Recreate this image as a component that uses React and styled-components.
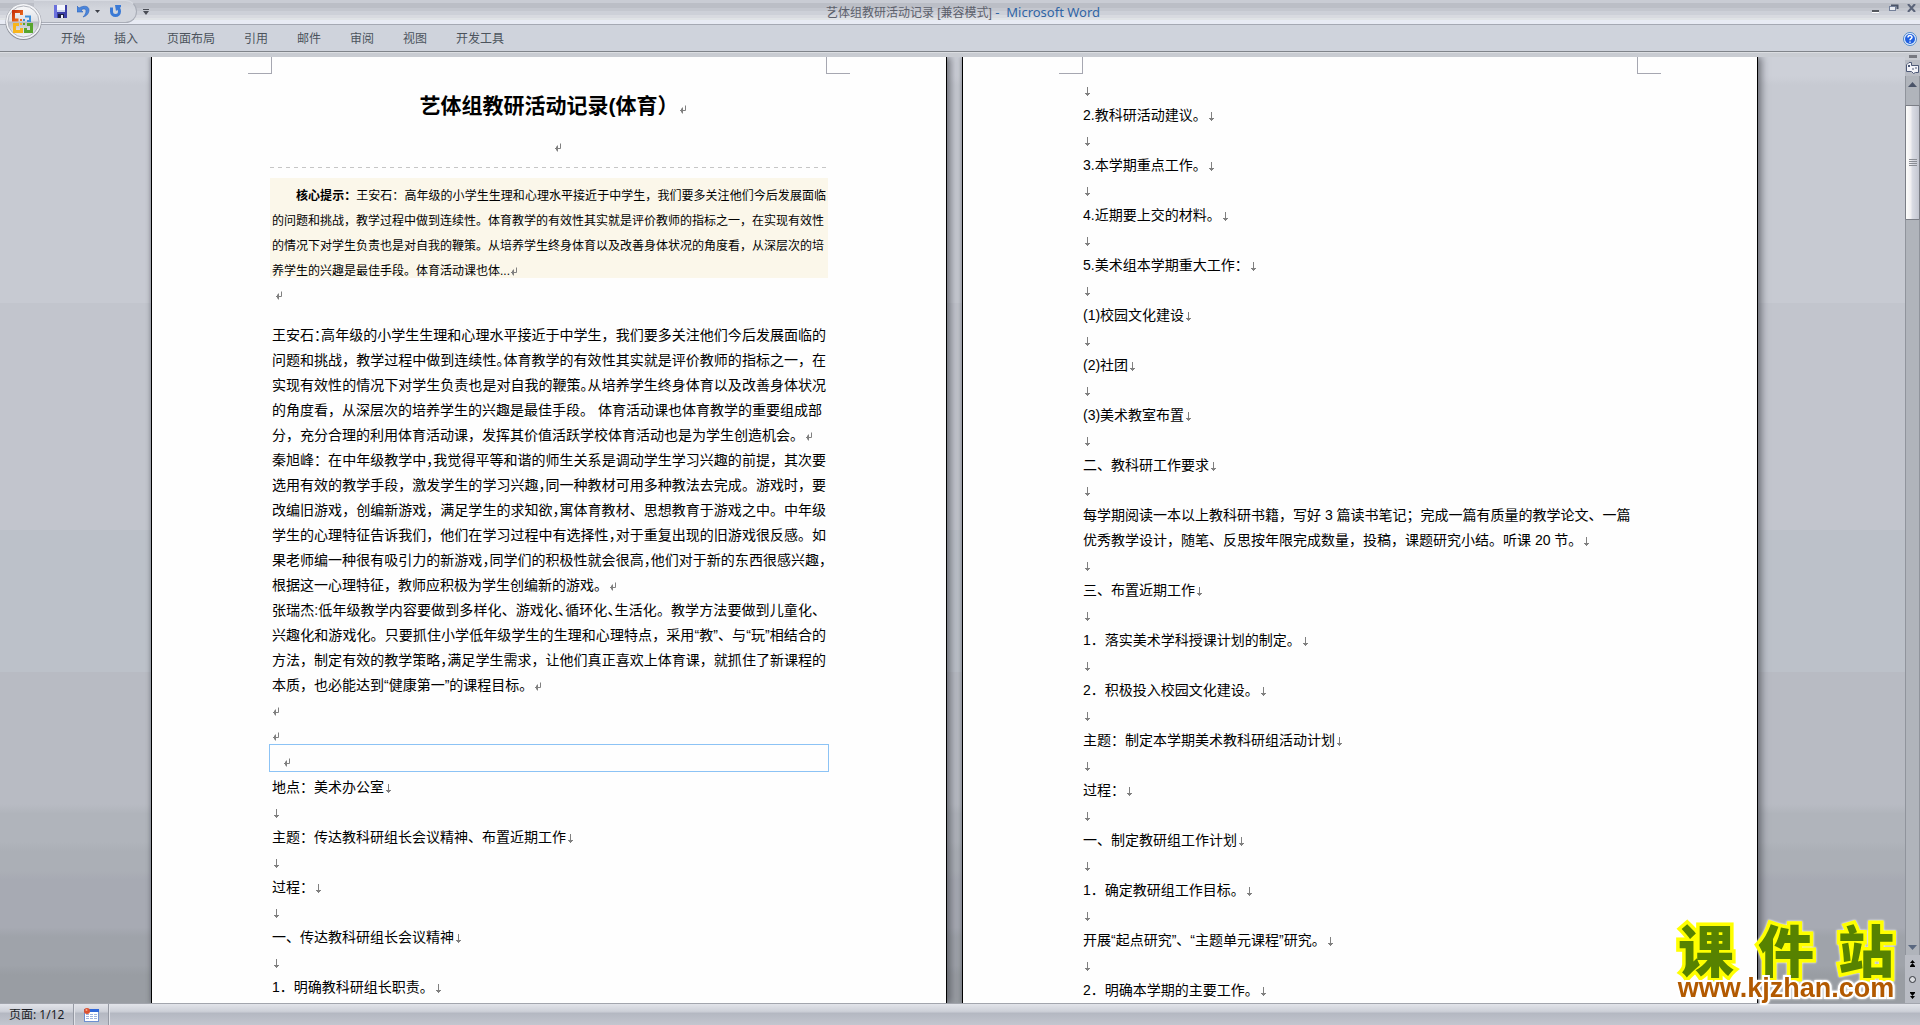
import React from "react";
import styled, { createGlobalStyle } from "styled-components";

const GlobalStyle = createGlobalStyle`
  * {
    box-sizing: border-box;
  }

  body {
    margin: 0;
    overflow: hidden;
    font-family: "Liberation Sans", "Noto Sans CJK SC", sans-serif;
  }

  button {
    font: inherit;
    color: inherit;
    background: none;
    border: none;
    padding: 0;
    cursor: pointer;
  }
`;

const Window = styled.div`
  position: relative;
  height: 100vh;
  display: flex;
  flex-direction: column;
  background: #c9ccd2;
`;

const TitleBar = styled.header`
  height: 25px;
  flex: none;
  display: grid;
  grid-template-columns: 1fr auto 1fr;
  align-items: start;
  padding-left: 6px;
  border-bottom: 1px solid #a5a9b3;
  background: linear-gradient(
    #c9ccd4 0 3px,
    #bbbec6 3px 8px,
    #c4c7cf 8px 11px,
    #cdd0d8 11px 15px,
    #d8dae0 15px 18px,
    #e0e3e6 18px 20px,
    #e8ebf4 20px 24px
  );
`;

const QuickAccess = styled.div`
  display: flex;
  align-items: center;
  gap: 5px;
  margin-left: 28px;
`;

const QuickPill = styled.div`
  height: 23px;
  display: flex;
  align-items: center;
  padding: 0 13px 0 19px;
  background: linear-gradient(#c9ccd4, #d3d6dd 40%, #d3d6dd);
  border: 1px solid #a9adb7;
  border-top-color: #d8dbe2;
  border-left: none;
  border-radius: 0 12px 12px 0;
`;

const ToolButton = styled.button`
  display: flex;
  align-items: center;
  justify-content: center;
  height: 16px;
  width: ${(props) => props.$width || 16}px;
  margin-right: ${(props) => props.$after || 0}px;
`;

const Caption = styled.h1`
  margin: 0;
  font-size: 12px;
  font-weight: 400;
  line-height: 24px;
  color: #5c606b;
  white-space: pre;
`;

const AppName = styled.span`
  font-family: "Noto Sans", sans-serif;
  font-size: 13px;
  color: #3065a5;
`;

const WindowButtons = styled.div`
  justify-self: end;
  display: flex;
  gap: 2px;
`;

const OfficeButton = styled.button`
  position: absolute;
  left: 5px;
  top: 3px;
  width: 39px;
  height: 39px;
  display: flex;
`;

const Ribbon = styled.nav`
  height: 28px;
  flex: none;
  display: flex;
  align-items: center;
  gap: 29px;
  padding: 0 3px 0 61px;
  background: #cfd3dc;
  border-bottom: 1px solid #dcdee2;
  box-shadow: inset 0 -1px 0 #80848a;
`;

const RibbonTab = styled.button`
  font-size: 12px;
  line-height: 24px;
  color: #4c535c;
`;

const HelpButton = styled.button`
  display: flex;
  margin-left: auto;
`;

const Body = styled.div`
  flex: 1;
  min-height: 0;
  display: flex;
`;

const Workspace = styled.main`
  flex: 1;
  min-width: 0;
  display: flex;
  justify-content: center;
  align-items: stretch;
  gap: 15px;
  margin-top: 4px;
  padding-left: 4px;
  overflow: hidden;
  background: linear-gradient(
    #cdd0d8 0 2%,
    #c7cad2 3% 26%,
    #c2c5cd 26% 50%,
    #bcc1c9 50% 65%,
    #b8bbc3 65% 79%,
    #b0b4bb 80% 83%,
    #abafb6 84% 86%,
    #a7aab3 87% 92%,
    #9fa3aa 93% 96%,
    #999da3 97%
  );
`;

const Sheet = styled.article`
  flex: 0 1 796px;
  background: #fefefe;
  border: solid #000;
  border-width: 0 1px;
  box-shadow: 4px 0 7px rgba(70, 72, 80, 0.6), -1px 0 4px rgba(70, 72, 80, 0.4);
`;

const CropMarks = styled.div`
  height: 17px;
  display: flex;
  justify-content: space-between;
  padding: 0 96px;
`;

const CropMark = styled.span`
  width: 24px;
  border: solid #a6a7b1;
  border-width: ${(props) => (props.$side === "left" ? "0 1px 1px 0" : "0 0 1px 1px")};
`;

const SheetText = styled.div`
  padding: ${(props) => props.$top}px 120px 0;
`;

const DocTitle = styled.h2`
  margin: 0;
  font-size: 21px;
  line-height: 40px;
  text-align: center;
  padding-left: 8px;
`;

const TitleGap = styled.div`
  height: 42px;
  display: flex;
  align-items: center;
  justify-content: center;
  padding-left: 18px;
  margin: 0 -2px;
  background: repeating-linear-gradient(90deg, #c6c6c6 0 4px, transparent 4px 8px) bottom / 100% 1px no-repeat;
`;

const Hint = styled.div`
  height: 100px;
  margin: 10px -2px 0;
  padding: 6px 2px 0;
  background: #fbf7ea;
  font-size: 12px;
`;

const HintGap = styled.div`
  height: 45px;
  padding: 4px 0 0 2px;
`;

const Row = styled.p`
  margin: 0;
  height: 25px;
  line-height: 25px;
  font-size: ${(props) => (props.$small ? 12 : 14)}px;
  color: #000;
  white-space: nowrap;
  text-indent: ${(props) => (props.$indent ? 24 : 0)}px;
  text-align-last: ${(props) => (props.$full ? "justify" : "left")};
`;

const HalfWidth = styled.span`
  font-feature-settings: "halt" 1;
`;

const SelectedFrame = styled.div`
  height: 28px;
  margin: -4px -3px 3px;
  padding: 4px 0 0 13px;
  border: 1px solid #8cc3f5;
`;

const MarkSvg = styled.svg`
  margin-left: ${(props) => props.$before}px;
  vertical-align: -1px;
`;

const ScrollColumn = styled.aside`
  width: 15px;
  flex: none;
  display: flex;
  flex-direction: column;
  align-items: stretch;
  background: #b9bcc4;
`;

const SplitHandle = styled.div`
  height: 7px;
  padding: 2px 3px 2px 4px;
  background: #c9ccd2;

  &::before {
    content: "";
    display: block;
    height: 3px;
    background: #777980;
  }
`;

const ScrollButton = styled.button`
  display: flex;
  align-items: center;
  justify-content: center;
  height: 16px;
`;

const Track = styled.div`
  flex: 1;
  min-height: 0;
  display: flex;
  flex-direction: column;
  background: #b0b4bb;
  border-left: 1px solid #90949c;
  border-right: 1px solid #90949c;
`;

const Thumb = styled.div`
  height: 115px;
  margin: 13px -1px auto;
  display: flex;
  align-items: center;
  justify-content: center;
  border: 1px solid #7b7e86;
  border-radius: 1px;
  background: linear-gradient(90deg, #fdfdfb, #f1f0f2 35%, #d9dbe3 50%, #c3c6d0);
`;

const StatusBar = styled.footer`
  height: 22px;
  flex: none;
  display: flex;
  align-items: stretch;
  border-top: 1px solid #a2a5ad;
  background: linear-gradient(#e2e4ea, #cdd0d8 35%, #b4b8c2 45%, #c3c6cf);
`;

const StatusButton = styled.button`
  display: flex;
  align-items: center;
  padding: 0 9px;
  font-family: "Noto Sans", "Noto Sans CJK SC", sans-serif;
  font-size: 12px;
  line-height: 20px;
  color: #1b1e26;
  border-right: 1px solid #9599a3;
  box-shadow: 1px 0 0 #e1e3e9;
`;

const Watermark = styled.a`
  position: absolute;
  right: 20px;
  bottom: 25px;
  width: 228px;
  text-decoration: none;
  font-weight: 700;
  paint-order: stroke fill;
  filter: drop-shadow(0 0 1px #fff);
`;

const WatermarkName = styled.span`
  display: flex;
  justify-content: space-between;
  padding: 0 6px;
  font-size: 56px;
  font-weight: 900;
  line-height: 46px;
  color: #578200;
  -webkit-text-stroke: 7px #ffff00;
`;

const WatermarkUrl = styled.span`
  display: block;
  text-align: center;
  font-size: 27px;
  line-height: 24px;
  color: #b25900;
  -webkit-text-stroke: 4px #fff;
`;

const ParagraphMark = ({ before = 1 }) => (
  <MarkSvg $before={before} width="8" height="9" viewBox="0 0 8 9" fill="none" stroke="#808080" aria-hidden="true">
    <path d="M6.500 0.500V5.500H1M3.500 2.500V8.500M2.500 3.500V7.500" />
  </MarkSvg>
);

const BreakMark = ({ before = 2 }) => (
  <MarkSvg $before={before} width="5" height="9" viewBox="0 0 5 9" fill="none" stroke="#808080" aria-hidden="true">
    <path d="M2.500 0V9M0 6.500H5M1 7.500H4" />
  </MarkSvg>
);

const PUNCTUATION = /[，。、：]/g;

// Sets `count` punctuation marks, taken from the middle of the line, at half width.
const squeeze = (text, count) => {
  const places = [...text.matchAll(PUNCTUATION)].map((m) => m.index);
  const first = Math.floor((places.length - count) / 2);
  const chosen = places.slice(first, first + count);
  const parts = [];
  let from = 0;
  chosen.forEach((at) => {
    parts.push(text.slice(from, at));
    parts.push(<HalfWidth key={at}>{text[at]}</HalfWidth>);
    from = at + 1;
  });
  parts.push(text.slice(from));
  return parts;
};

const hintLines = [
  "的问题和挑战，教学过程中做到连续性。体育教学的有效性其实就是评价教师的指标之一，在实现有效性",
  "的情况下对学生负责也是对自我的鞭策。从培养学生终身体育以及改善身体状况的角度看，从深层次的培",
];

const speechLines = [
  { text: "王安石：高年级的小学生生理和心理水平接近于中学生，我们要多关注他们今后发展面临的", half: 1, full: true },
  { text: "问题和挑战，教学过程中做到连续性。体育教学的有效性其实就是评价教师的指标之一，在", half: 1, full: true },
  { text: "实现有效性的情况下对学生负责也是对自我的鞭策。从培养学生终身体育以及改善身体状况", half: 1, full: true },
  { text: "的角度看，从深层次的培养学生的兴趣是最佳手段。 体育活动课也体育教学的重要组成部" },
  { text: "分，充分合理的利用体育活动课，发挥其价值活跃学校体育活动也是为学生创造机会。", end: true },
  { text: "秦旭峰：在中年级教学中，我觉得平等和谐的师生关系是调动学生学习兴趣的前提，其次要", half: 1, full: true },
  { text: "选用有效的教学手段，激发学生的学习兴趣，同一种教材可用多种教法去完成。游戏时，要", half: 1, full: true },
  { text: "改编旧游戏，创编新游戏，满足学生的求知欲，寓体育教材、思想教育于游戏之中。中年级", half: 1, full: true },
  { text: "学生的心理特征告诉我们，他们在学习过程中有选择性，对于重复出现的旧游戏很反感。如", half: 1, full: true },
  { text: "果老师编一种很有吸引力的新游戏，同学们的积极性就会很高，他们对于新的东西很感兴趣，", half: 3, full: true },
  { text: "根据这一心理特征，教师应积极为学生创编新的游戏。", end: true },
  { text: "张瑞杰:低年级教学内容要做到多样化、游戏化、循环化、生活化。教学方法要做到儿童化、", half: 2, full: true },
  { text: "兴趣化和游戏化。只要抓住小学低年级学生的生理和心理特点，采用“教”、与“玩”相结合的", full: true },
  { text: "方法，制定有效的教学策略，满足学生需求，让他们真正喜欢上体育课，就抓住了新课程的", half: 1, full: true },
  { text: "本质，也必能达到“健康第一”的课程目标。", end: true },
];

const agenda = [
  "地点：美术办公室",
  "主题：传达教科研组长会议精神、布置近期工作",
  "过程：",
  "一、传达教科研组长会议精神",
  "1．明确教科研组长职责。",
];

const plan = [
  ["2.教科研活动建议。"],
  ["3.本学期重点工作。"],
  ["4.近期要上交的材料。"],
  ["5.美术组本学期重大工作："],
  ["(1)校园文化建设"],
  ["(2)社团"],
  ["(3)美术教室布置"],
  ["二、教科研工作要求"],
  [
    "每学期阅读一本以上教科研书籍，写好 3 篇读书笔记；完成一篇有质量的教学论文、一篇",
    "优秀教学设计，随笔、反思按年限完成数量，投稿，课题研究小结。听课 20 节。",
  ],
  ["三、布置近期工作"],
  ["1．落实美术学科授课计划的制定。"],
  ["2．积极投入校园文化建设。"],
  ["主题：制定本学期美术教科研组活动计划"],
  ["过程："],
  ["一、制定教研组工作计划"],
  ["1．确定教研组工作目标。"],
  ["开展“起点研究”、“主题单元课程”研究。"],
  ["2．明确本学期的主要工作。"],
];

const tabs = ["开始", "插入", "页面布局", "引用", "邮件", "审阅", "视图", "开发工具"];

const OfficeLogo = () => (
  <svg width="39" height="39" viewBox="0 0 39 39">
    <defs>
      <linearGradient id="orb" x1="0" y1="0" x2="0" y2="1">
        <stop offset="0" stopColor="#fafafb" />
        <stop offset="0.48" stopColor="#dfe1e6" />
        <stop offset="0.52" stopColor="#b9bcc6" />
        <stop offset="1" stopColor="#f6f7fa" />
      </linearGradient>
      <linearGradient id="red" x1="0" y1="0" x2="1" y2="1">
        <stop offset="0" stopColor="#c8330c" />
        <stop offset="1" stopColor="#f47a20" />
      </linearGradient>
    </defs>
    <circle cx="18.500" cy="19" r="18" fill="#8b8e97" />
    <circle cx="18.500" cy="18.500" r="17.500" fill="#f4f5f8" />
    <circle cx="18.500" cy="18.500" r="15.500" fill="url(#orb)" stroke="#b0b3bb" />
    <g fill="none" strokeWidth="3">
      <path d="M13.500 17H8.500V8.500H16.500V12" stroke="url(#red)" />
      <path d="M20 13.500H25V18H22" stroke="#3f8fd8" strokeWidth="2" />
      <path d="M14 21.500H9.500V28.500H16.500V25" stroke="#f8b51c" />
      <path d="M22 21.500H26.500V28.500H20.500V25" stroke="#58a52e" />
    </g>
    <g>
      <rect x="15" y="16" width="2" height="2" fill="#ee6a1c" />
      <rect x="18" y="16" width="2" height="2" fill="#3f8fd8" />
      <rect x="15" y="20" width="2" height="2" fill="#f8b51c" />
      <rect x="18" y="20" width="2" height="2" fill="#58a52e" />
    </g>
  </svg>
);

const SaveIcon = () => (
  <svg width="14" height="14" viewBox="0 0 14 14">
    <path d="M0 0H13V13H1L0 12Z" fill="#3b3fa8" />
    <path d="M0 0H3V13H1L0 12Z" fill="#6a70dd" />
    <rect x="3" y="0" width="8" height="7" fill="#f4f6fc" />
    <rect x="3" y="5" width="8" height="2" fill="#c9d2ee" />
    <rect x="4" y="9" width="6" height="4" fill="#1c1f45" />
    <rect x="7" y="10" width="2" height="3" fill="#eef0fa" />
  </svg>
);

const UndoIcon = () => (
  <svg width="13" height="13" viewBox="0 0 13 13">
    <path
      d="M0 1V7H6L4 5C7 3 9 4 9 6C9 8 8 10 6 12C10 11 12 8 12 5C12 1 7 0 2 3Z"
      fill="#4a86dc"
      stroke="#2d62ba"
      strokeWidth="0.600"
    />
  </svg>
);

const RedoIcon = () => (
  <svg width="13" height="13" viewBox="0 0 13 13">
    <path d="M2.500 2.500V6.500A4 4 0 0 0 10.500 6.500C10.500 4.500 9.500 3 8 2.500" fill="none" stroke="#3b7ad6" strokeWidth="3" />
    <path d="M6 0H12V2L7 6Z" fill="#3b7ad6" />
  </svg>
);

const HelpIcon = () => (
  <svg width="14" height="14" viewBox="0 0 14 14">
    <circle cx="7" cy="7" r="6.500" fill="#e8f2fd" stroke="#4f86c9" />
    <circle cx="7" cy="7" r="5" fill="#2160e0" />
    <path d="M5 5.500C5 3 9 3 9 5.300C9 6.800 7 6.500 7 8.300M7 9.400V10.700" fill="none" stroke="#fff" strokeWidth="1.500" />
  </svg>
);

const StatusIcon = () => (
  <svg width="16" height="14" viewBox="0 0 16 14">
    <rect x="1.500" y="1.500" width="14" height="12" fill="#fff" stroke="#6f8fd0" />
    <rect x="1" y="1" width="15" height="3" fill="#2f66d8" />
    <path d="M3 6.500H14M3 8.500H14M3 10.500H14" stroke="#9eb2de" strokeDasharray="3 1" />
    <circle cx="4" cy="3" r="3" fill="#dc5230" />
    <circle cx="3.500" cy="2" r="1" fill="#f6a98c" />
  </svg>
);

const App = () => {
  return (
    <Window>
      <GlobalStyle />
      <TitleBar>
        <QuickAccess>
          <QuickPill>
            <ToolButton aria-label="保存" $after={6}>
              <SaveIcon />
            </ToolButton>
            <ToolButton aria-label="撤消" $after={3}>
              <UndoIcon />
            </ToolButton>
            <ToolButton aria-label="撤消列表" $width={6} $after={7}>
              <svg width="5" height="3" viewBox="0 0 5 3">
                <path d="M0 0H5L2.500 3Z" fill="#3c3f47" />
              </svg>
            </ToolButton>
            <ToolButton aria-label="恢复">
              <RedoIcon />
            </ToolButton>
          </QuickPill>
          <ToolButton aria-label="自定义快速访问工具栏" $width={7}>
            <svg width="6" height="6" viewBox="0 0 6 6">
              <path d="M0 0.500H6" stroke="#4a4d55" />
              <path d="M0 2H6L3 6Z" fill="#4a4d55" />
            </svg>
          </ToolButton>
        </QuickAccess>
        <Caption>
          艺体组教研活动记录 [兼容模式] <AppName>-  Microsoft Word</AppName>
        </Caption>
        <WindowButtons>
          <ToolButton aria-label="最小化">
            <svg width="8" height="10" viewBox="0 0 8 10">
              <path d="M0 7H7V9H0Z" fill="#55585f" />
              <path d="M0 9.500H7" stroke="#fff" />
            </svg>
          </ToolButton>
          <ToolButton aria-label="向下还原">
            <svg width="10" height="8" viewBox="0 0 10 8">
              <path d="M2 1.500H8.500V5" fill="none" stroke="#4b5468" strokeWidth="2" />
              <rect x="0.500" y="2.500" width="6" height="4" fill="#e9ecf2" stroke="#74809a" />
            </svg>
          </ToolButton>
          <ToolButton aria-label="关闭">
            <svg width="10" height="8" viewBox="0 0 10 8">
              <path d="M1 0L8 8M8 0L1 8" stroke="#5a6379" strokeWidth="2" />
            </svg>
          </ToolButton>
        </WindowButtons>
      </TitleBar>
      <OfficeButton aria-label="Office 按钮">
        <OfficeLogo />
      </OfficeButton>
      <Ribbon>
        {tabs.map((tab) => (
          <RibbonTab key={tab}>{tab}</RibbonTab>
        ))}
        <HelpButton aria-label="帮助">
          <HelpIcon />
        </HelpButton>
      </Ribbon>

      <Body>
        <Workspace>
          <Sheet>
            <CropMarks>
              <CropMark $side="left" />
              <CropMark $side="right" />
            </CropMarks>
            <SheetText $top={12}>
              <DocTitle>
                艺体组教研活动记录(体育）
                <ParagraphMark before={0} />
              </DocTitle>
              <TitleGap>
                <ParagraphMark before={0} />
              </TitleGap>
              <Hint>
                <Row $small $indent $full>
                  <strong>核心提示：</strong>
                  王安石：高年级的小学生生理和心理水平接近于中学生，我们要多关注他们今后发展面临
                </Row>
                {hintLines.map((line) => (
                  <Row $small key={line}>
                    {line}
                  </Row>
                ))}
                <Row $small>
                  养学生的兴趣是最佳手段。体育活动课也体...
                  <ParagraphMark before={0} />
                </Row>
              </Hint>
              <HintGap>
                <Row>
                  <ParagraphMark />
                </Row>
              </HintGap>
              {speechLines.map(({ text, half = 0, full, end }) => (
                <Row key={text} $full={full}>
                  {squeeze(text, half)}
                  {end && <ParagraphMark />}
                </Row>
              ))}
              <Row>
                <ParagraphMark before={0} />
              </Row>
              <Row>
                <ParagraphMark before={0} />
              </Row>
              <SelectedFrame>
                <Row>
                  <ParagraphMark before={0} />
                </Row>
              </SelectedFrame>
              {agenda.map((line) => (
                <React.Fragment key={line}>
                  <Row>
                    {line}
                    <BreakMark />
                  </Row>
                  <Row>
                    <BreakMark />
                  </Row>
                </React.Fragment>
              ))}
            </SheetText>
          </Sheet>

          <Sheet>
            <CropMarks>
              <CropMark $side="left" />
              <CropMark $side="right" />
            </CropMarks>
            <SheetText $top={4}>
              {plan.map((lines) => (
                <React.Fragment key={lines[0]}>
                  <Row>
                    <BreakMark />
                  </Row>
                  {lines.map((line, i) => (
                    <Row key={line}>
                      {line}
                      {i === lines.length - 1 && <BreakMark />}
                    </Row>
                  ))}
                </React.Fragment>
              ))}
            </SheetText>
          </Sheet>
        </Workspace>

        <ScrollColumn>
          <SplitHandle />
          <ScrollButton aria-label="标尺">
            <svg width="13" height="12" viewBox="0 0 13 12">
              <path
                d="M1 2.500L3 0.500H5.500V3.500H12.500V10.500H9.500L7.500 11.500L5.500 9.500H0.500V2.500"
                fill="#f3f3f8"
                stroke="#4c5876"
              />
              <path d="M2 3L4 5M4 3L2 5M7 6V8M10 5V7" stroke="#4c5876" />
            </svg>
          </ScrollButton>
          <Track>
            <ScrollButton aria-label="向上滚动">
              <svg width="9" height="5" viewBox="0 0 9 5">
                <path d="M0 5L4.500 0L9 5Z" fill="#4a5368" />
              </svg>
            </ScrollButton>
            <Thumb>
              <svg width="8" height="7" viewBox="0 0 8 7">
                <path d="M0 0.500H8M0 2.500H8M0 4.500H8M0 6.500H8" stroke="#8a8d94" />
              </svg>
            </Thumb>
            <ScrollButton aria-label="向下滚动">
              <svg width="9" height="5" viewBox="0 0 9 5">
                <path d="M0 0H9L4.500 5Z" fill="#5a6880" />
              </svg>
            </ScrollButton>
          </Track>
          <ScrollButton aria-label="上一页">
            <svg width="5" height="7" viewBox="0 0 5 7">
              <path d="M0 3L2.500 0L5 3ZM0 6L2.500 3L5 6ZM0 6H5V7H0Z" fill="#000" />
            </svg>
          </ScrollButton>
          <ScrollButton aria-label="选择浏览对象">
            <svg width="7" height="7" viewBox="0 0 7 7">
              <circle cx="3.500" cy="3.500" r="3" fill="#d9dbe0" stroke="#33363d" />
            </svg>
          </ScrollButton>
          <ScrollButton aria-label="下一页">
            <svg width="5" height="7" viewBox="0 0 5 7">
              <path d="M0 0H5V1H0ZM0 1L2.500 4L5 1ZM0 4L2.500 7L5 4Z" fill="#000" />
            </svg>
          </ScrollButton>
        </ScrollColumn>
      </Body>

      <StatusBar>
        <StatusButton>页面: 1/12</StatusButton>
        <StatusButton aria-label="宏录制">
          <StatusIcon />
        </StatusButton>
      </StatusBar>

      <Watermark href="#">
        <WatermarkName>
          <span>课</span>
          <span>件</span>
          <span>站</span>
        </WatermarkName>
        <WatermarkUrl>www.kjzhan.com</WatermarkUrl>
      </Watermark>
    </Window>
  );
};

export default App;
